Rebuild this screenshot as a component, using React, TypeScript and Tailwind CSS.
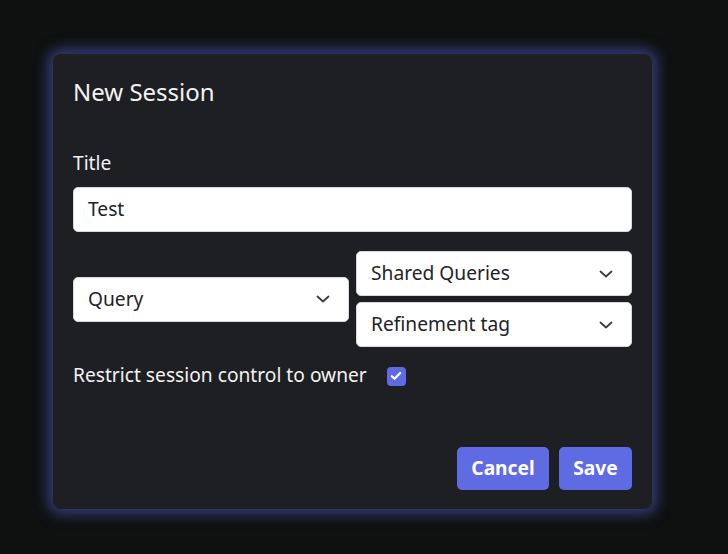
import React from "react";

function Chevron() {
  return (
    <svg width="14" height="8" viewBox="0 0 14 8" fill="none" className="shrink-0">
      <path d="M1.5 1.5L7 6.5L12.5 1.5" stroke="#3a3b3f" strokeWidth="1.8" strokeLinecap="round" strokeLinejoin="round" />
    </svg>
  );
}

function Select({ label }: { label: string }) {
  return (
    <div className="flex h-[45px] items-center justify-between rounded-[5px] border border-[#d8d8d8] bg-white pl-[14px] pr-[18px] text-[19.2px] text-[#222326]">
      <span>{label}</span>
      <Chevron />
    </div>
  );
}

export default function App() {
  return (
    <div
      className="min-h-[554px] w-full bg-[#0f1010] pl-[53px] pt-[54px]"
      style={{ fontFamily: '"Noto Sans", "Open Sans", sans-serif' }}
    >
      <div className="flex h-[455px] w-[599px] flex-col rounded-[8px] bg-[#1e1f22] px-5 pt-[20px] pb-[19px] shadow-[0_0_14px_5px_rgba(95,107,226,0.5)]">
        <h1 className="text-[24px] leading-[36px] text-[#f2f2f2]">New Session</h1>
        <div className="mt-[40px] text-[19.2px] leading-[26px] text-[#f2f2f2]">Title</div>
        <div className="mt-[11px] flex h-[45px] items-center rounded-[5px] border border-[#d8d8d8] bg-white px-[14px] text-[19.2px] text-[#222326]">
          Test
        </div>
        <div className="mt-[19px] grid grid-cols-2 items-center gap-x-[7px]">
          <Select label="Query" />
          <div className="flex flex-col gap-[6px]">
            <Select label="Shared Queries" />
            <Select label="Refinement tag" />
          </div>
        </div>
        <div className="mt-[13px] flex items-center">
          <span className="text-[19.2px] leading-[30px] text-[#f2f2f2]">Restrict session control to owner</span>
          <span className="ml-[20px] mt-[2px] flex h-[19px] w-[19px] items-center justify-center rounded-[4px] bg-[#5f6be2]">
            <svg width="12" height="10" viewBox="0 0 12 10" fill="none">
              <path d="M1.8 5.2L4.6 7.8L10.2 2" stroke="white" strokeWidth="2.2" strokeLinecap="round" strokeLinejoin="round" />
            </svg>
          </span>
        </div>
        <div className="mt-auto flex justify-end gap-[10px]">
          <button className="h-[43px] w-[92px] rounded-[5px] bg-[#5f6be2] text-[19.2px] font-bold text-white">Cancel</button>
          <button className="h-[43px] w-[73px] rounded-[5px] bg-[#5f6be2] text-[19.2px] font-bold text-white">Save</button>
        </div>
      </div>
    </div>
  );
}
